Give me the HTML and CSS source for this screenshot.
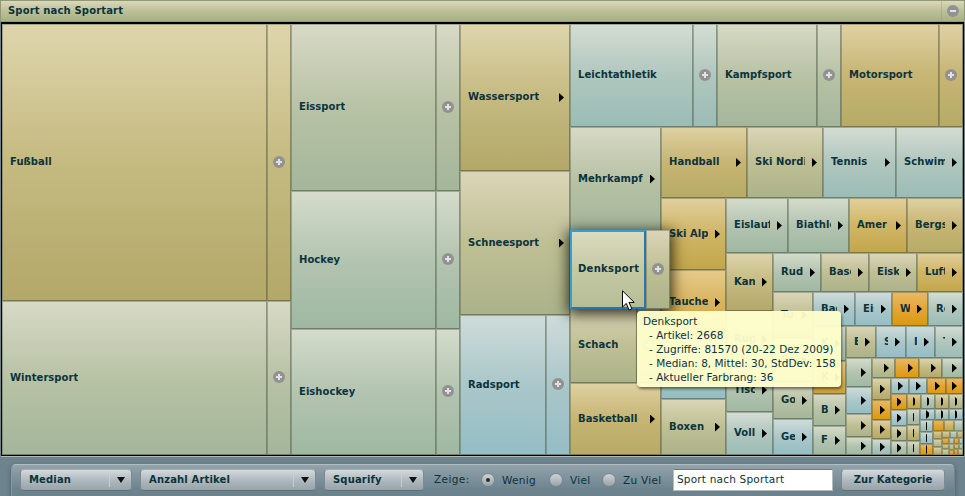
FILE: index.html
```html
<!DOCTYPE html>
<html lang="de">
<head>
<meta charset="utf-8">
<title>Sport nach Sportart</title>
<link rel="stylesheet" href="styles.css">
</head>
<body>
<header class="titlebar">
  <span class="title">Sport nach Sportart</span>
  <span class="collapse"><svg class="badge" viewBox="0 0 12 12"><circle cx="6" cy="6" r="6"/><path d="M3 6h6"/></svg></span>
</header>
<main class="frame"><div class="treemap" id="treemap"></div></main>
<footer class="dock">
  <div class="controls">
    <div class="button select median"><span>Median</span><i class="caret"></i></div>
    <div class="button select artikel"><span>Anzahl Artikel</span><i class="caret"></i></div>
    <div class="button select layout"><span>Squarify</span><i class="caret"></i></div>
    <span class="caption">Zeige:</span>
    <label class="option wenig"><i class="radio checked"></i>Wenig</label>
    <label class="option viel"><i class="radio"></i>Viel</label>
    <label class="option zuviel"><i class="radio"></i>Zu Viel</label>
    <div class="field">Sport nach Sportart</div>
    <div class="button action">Zur Kategorie</div>
  </div>
</footer>
<div class="tooltip">
  <div>Denksport</div>
  <div class="fact">- Artikel: 2668</div>
  <div class="fact">- Zugriffe: 81570 (20-22 Dez 2009)</div>
  <div class="fact">- Median: 8, Mittel: 30, StdDev: 158</div>
  <div class="fact">- Aktueller Farbrang: 36</div>
</div>
<svg class="pointer" viewBox="0 0 13 21"><path d="M.5 .8V17l3.8-3.6 2.8 6.6 2.7-1.2L7 12.4h5.2z"/></svg>
<script src="treemap.js"></script>
</body>
</html>
```
FILE: styles.css
```css
* { box-sizing: border-box; }

body {
  margin: 0;
  height: 496px;
  overflow: hidden;
  display: flex;
  flex-direction: column;
  background: #6d838e;
  color: #0b333c;
  font: 10.5px/14px "DejaVu Sans", sans-serif;
  white-space: nowrap;
}

.titlebar {
  flex: 0 0 22px;
  display: flex;
  align-items: center;
  justify-content: space-between;
  padding-left: 7px;
  border: 1px solid #8f9973;
  background: linear-gradient(#dbd8bc, #bcc098 50%, #a9b085);
}
.title { font-weight: bold; font-size: 10px; letter-spacing: .15px; padding-bottom: 1px; }
.collapse {
  display: flex;
  align-items: center;
  align-self: stretch;
  width: 23px;
  padding-left: 5px;
  border-left: 1px solid rgba(143, 153, 115, .4);
}

.badge { display: block; width: 12px; height: 12px; flex: none; }
.badge circle { fill: #929292; }
.badge path { stroke: #e2e2e2; stroke-width: 2; fill: none; }

.frame {
  flex: 0 0 435px;
  padding: 2px 1px 1px;
  margin: 0 1px 0 1px;
  background: #000;
  border-bottom: 1px solid #b5b9b5;
}
.treemap { height: 431px; }

.rest, .strip { display: flex; min-width: 0; min-height: 0; }
.treemap > .rest { height: 100%; }
.rest { flex: 1 1 0; }
.rest.column, .strip.row { flex-direction: row; }
.rest.row, .strip.column { flex-direction: column; }

.tile { display: flex; min-width: 0; min-height: 0; }
.face, .expand {
  display: flex;
  align-items: center;
  min-width: 0;
  overflow: hidden;
  border: 1px solid rgba(75, 88, 60, .38);
  border-right-color: rgba(65, 75, 60, .48);
  border-bottom-color: rgba(60, 70, 60, .5);
  background: linear-gradient(var(--top), var(--mid) 50%, var(--low)) border-box;
}
.face { flex: 1 1 0; padding: 0 5px; }
.expand { flex: 0 0 24px; justify-content: center; padding: 0 1px 2px 0; }
.content { display: flex; align-items: center; flex: 1; min-width: 0; overflow: hidden; }
.label {
  font-weight: bold;
  font-size: 10px;
  letter-spacing: .05px;
  text-indent: 2px;
  overflow: hidden;
  max-width: calc(100% - 12px);
  padding-bottom: 1px;
}
.roomy .label { max-width: none; }
.arrow {
  flex: none;
  width: 5px;
  height: 9px;
  margin-left: auto;
  background: #000;
  clip-path: polygon(0 0, 100% 50%, 0 100%);
}
.tiny .face { padding: 0; border-color: rgba(70, 80, 60, .4); }

.tan { --top: #ded5ad; --mid: #c5ba80; --low: #b3a869; }
.gold { --top: #dfd1a3; --mid: #c7b574; --low: #b6aa66; }
.honey { --top: #e2cf9c; --mid: #d0b567; --low: #c2a64b; }
.amber { --top: #e7cb8b; --mid: #d9b45f; --low: #cf9f36; }
.orange { --top: #e8ba67; --mid: #e2a636; --low: #dc980b; }
.sage { --top: #dbd6b8; --mid: #bfbf94; --low: #abb289; }
.green { --top: #d8dac6; --mid: #b8c2a5; --low: #a4b69a; }
.mint { --top: #d5dccb; --mid: #b3c4b0; --low: #9fb8a2; }
.teal { --top: #d5ddd3; --mid: #b0c7be; --low: #9abcb5; }
.blue { --top: #d0dcda; --mid: #aac7c9; --low: #94bdc4; }

.raised { position: relative; z-index: 2; margin: -1px -9px -1px 0; box-shadow: 0 3px 13px 2px rgba(20, 20, 0, .85); }
.raised .face { border: 2px solid #2678b4; border-top-color: #3a9bdc; border-left-color: #3a9bdc; padding: 0 4px; --top: #dcdcc0; --mid: #c4c9a4; --low: #b5bd96; }
.raised .label { letter-spacing: .3px; }

.tooltip {
  position: absolute;
  z-index: 5;
  left: 637px;
  top: 311px;
  width: 204px;
  height: 76px;
  padding: 3px 6px;
  border-radius: 4px;
  background: rgba(255, 255, 204, .95);
  box-shadow: 1px 2px 3px rgba(0, 0, 0, .5);
}
.fact { padding-left: 6px; }
.pointer { position: absolute; z-index: 6; left: 622px; top: 290px; width: 13px; height: 21px; }
.pointer path { fill: #fff; stroke: #000; }

.dock { flex: 1; padding: 7px 10px 0 11px; }
.controls {
  height: 40px;
  display: flex;
  align-items: flex-start;
  padding: 4px 8px;
  border: 1px solid #a3b1b7;
  border-color: #b0bdc2 #71858f transparent #8499a3;
  border-radius: 5px 5px 0 0;
  background: linear-gradient(#92a3ab, #6c838e 65%);
  box-shadow: 0 2px 4px rgba(30, 50, 60, .5);
}
.button {
  height: 22px;
  border: 1px solid #7e878b;
  border-color: #a4adb1 #82898d #686e71;
  border-radius: 4px;
  background: linear-gradient(#d5dadc, #b0bac0 50%, #96a3aa);
  font-weight: bold;
  font-size: 10px;
  letter-spacing: .15px;
  line-height: 19px;
}
.select { display: flex; align-items: center; justify-content: space-between; padding: 0 0 0 8px; margin-right: 8px; }
.select span { padding-bottom: 1px; }
.caret { width: 22px; height: 14px; border-left: 1px solid #c7cfd2; display: flex; align-items: center; padding-left: 7px; }
.caret::before { content: ""; border: 4px solid transparent; border-top: 6px solid #111; border-bottom: 0; }
.median { width: 112px; }
.artikel { width: 176px; }
.layout { width: 100px; }
.caption { width: 47px; margin-left: 2px; line-height: 21px; letter-spacing: .4px; }
.option { display: flex; align-items: center; height: 21px; gap: 7px; letter-spacing: .3px; }
.radio { width: 14px; height: 14px; border: 1px solid #7c8589; border-radius: 50%; background: linear-gradient(#cdd3d6, #98a4aa); display: flex; align-items: center; justify-content: center; }
.radio.checked::after { content: ""; width: 4px; height: 4px; border-radius: 50%; background: #222c30; }
.wenig { width: 68px; }
.viel { width: 53px; }
.zuviel { width: 71px; }
.field { width: 160px; height: 22px; padding: 0 3px; border: 1px solid #b6babb; border-top-color: #777; background: #fff; line-height: 19px; letter-spacing: .2px; }
.action { width: 104px; margin-left: 8px; text-align: center; letter-spacing: .05px; }
```
FILE: treemap.js
```js
// Squarified layout: each strip is cut from the left (column) or the top (row)
// of the remaining area. A tile is [share, colour, label, kind].
const strips = [
  ['column', 289, [[277, 'tan', 'Fußball', '+'], [154, 'green', 'Wintersport', '+']]],
  ['column', 169, [[167, 'green', 'Eissport', '+'], [138, 'mint', 'Hockey', '+'], [126, 'mint', 'Eishockey', '+']]],
  ['column', 110, [[147, 'tan', 'Wassersport'], [144, 'sage', 'Schneesport'], [140, 'blue', 'Radsport', '+']]],
  ['row', 103, [[147, 'teal', 'Leichtathletik', '+'], [124, 'green', 'Kampfsport', '+'], [122, 'gold', 'Motorsport', '+']]],
  ['column', 91, [[104, 'green', 'Mehrkampf'], [77, 'sage', 'Denksport', 'raised'], [75, 'sage', 'Schach', '+'], [72, 'gold', 'Basketball']]],
  ['row', 71, [[86, 'gold', 'Handball'], [76, 'sage', 'Ski Nordi'], [73, 'teal', 'Tennis'], [67, 'teal', 'Schwimm']]],
  ['column', 65, [[72, 'honey', 'Ski Alp'], [65, 'amber', 'Tauche'], [64, 'blue', 'Langla'], [56, 'sage', 'Boxen']]],
  ['row', 55, [[62, 'mint', 'Eislauf'], [61, 'mint', 'Biathlo'], [58, 'honey', 'Amer'], [56, 'gold', 'Bergs']]],
  ['column', 47, [[58, 'tan', 'Kan'], [57, 'green', 'Rug'], [44, 'mint', 'Tisc'], [43, 'teal', 'Voll']]],
  ['row', 39, [[48, 'mint', 'Rude'], [48, 'sage', 'Base'], [48, 'sage', 'Eisk'], [46, 'honey', 'Luft']]],
  ['column', 40, [[46, 'sage', 'Tu'], [44, 'green', 'Se'], [37, 'green', 'Go'], [36, 'blue', 'Ge']]],
  ['row', 34, [[42, 'blue', 'Bad'], [37, 'blue', 'Eis'], [36, 'orange', 'W'], [35, 'teal', 'Re']]],
  ['column', 33, [[35, 'mint', 'K'], [33, 'amber', 'K'], [32, 'green', 'B'], [29, 'mint', 'F']]],
  ['row', 32, [[30, 'sage', 'E'], [30, 'blue', 'S'], [29, 'blue', 'I'], [28, 'teal', 'T']]],
  ['column', 26, [[29, 'mint'], [27, 'blue'], [23, 'sage'], [18, 'mint']]],
  ['row', 20, [[23, 'sage'], [24, 'orange'], [23, 'tan'], [21, 'mint']]],
  ['column', 19, [[22, 'tan'], [20, 'orange'], [19, 'gold'], [16, 'teal']]],
  ['row', 16, [[18, 'blue'], [18, 'blue'], [19, 'orange'], [17, 'orange']]],
  ['column', 16, [[16, 'orange'], [16, 'blue'], [15, 'sage'], [14, 'mint']]],
  ['row', 15, [[14, 'honey'], [14, 'mint'], [14, 'tan'], [14, 'sage']]],
  ['column', 13, [[16, 'mint'], [16, 'tan'], [14, 'green']]],
  ['row', 11, [[15, 'blue'], [14, 'teal'], [14, 'blue']]],
  ['column', 13, [[12, 'teal'], [12, 'blue'], [11, 'orange']]],
  ['row', 11, [[11, 'orange'], [10, 'honey'], [9, 'mint']], 'tiny'],
  ['column', 9, [[8, 'gold'], [8, 'sage'], [8, 'tan']], 'tiny'],
  ['row', 7, [[8, 'tan'], [7, 'mint'], [6, 'gold']], 'tiny'],
  ['column', 7, [[6, 'orange'], [5, 'tan'], [6, 'sage']], 'tiny'],
  ['row', 6, [[5, 'mint'], [5, 'orange'], [4, 'blue']], 'tiny'],
  ['column', 5, [[6, 'sage'], [5, 'orange']], 'tiny'],
  ['row', 5, [[5, 'gold'], [4, 'green']], 'tiny'],
  ['row', 6, [[4, 'orange'], [5, 'tan']], 'tiny']
];

function box(className, parent) {
  const node = document.createElement('div');
  node.className = className;
  parent.append(node);
  return node;
}

function drawTile([share, colour, text, kind], parent, size) {
  const tile = box(['tile', colour, size || '', kind === 'raised' ? kind : '', kind ? 'roomy' : ''].join(' '), parent);
  tile.style.flex = share + ' 1 0';
  // The raised tile reaches one pixel over its neighbours above and below.
  if (kind === 'raised') tile.style.flex = '0 0 ' + (share + 2) + 'px';
  const content = size ? box('face', tile) : box('content', box('face', tile));
  if (text) box('label', content).textContent = text;
  if (kind) {
    box('expand', tile).innerHTML = '<svg class="badge" viewBox="0 0 12 12"><circle cx="6" cy="6" r="6"/><path d="M3 6h6M6 3v6"/></svg>';
  } else if (!size) {
    box('arrow', content);
  }
}

let area = document.getElementById('treemap');
for (const [direction, span, tiles, size] of strips) {
  area = box('rest ' + direction, area);
  const strip = box('strip ' + direction, area);
  strip.style.flex = '0 0 ' + span + 'px';
  tiles.forEach(tile => drawTile(tile, strip, size));
}
```
